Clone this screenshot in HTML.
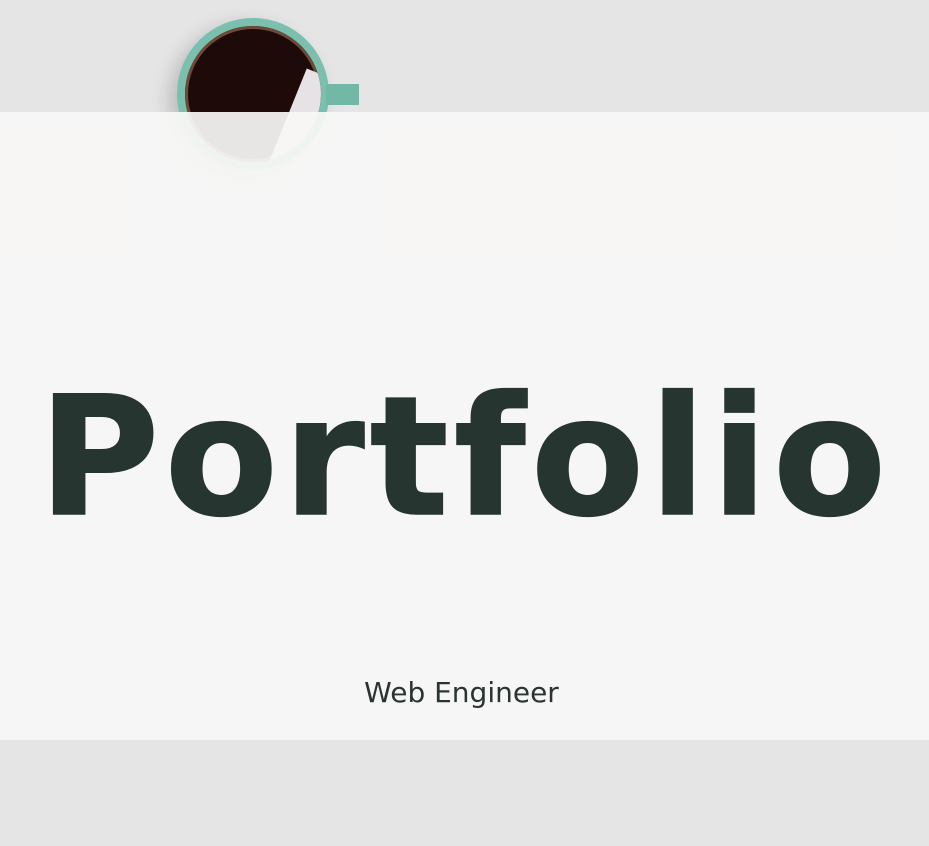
<!DOCTYPE html>
<html><head><style>
html,body{margin:0;padding:0;width:929px;height:846px;overflow:hidden;background:#e5e5e6;font-family:"DejaVu Sans","Liberation Sans",sans-serif}
.cup{position:absolute;left:177px;top:18px;width:152px;height:152px;border-radius:50%;background:#7bbfae;box-shadow:-8px 6px 18px rgba(0,0,0,.18)}
.in{position:absolute;left:8px;top:8px;width:136px;height:136px;border-radius:50%;background:#1e0a09;overflow:hidden;box-shadow:inset 0 0 0 3px #6d4a3a}
.in:after{content:"";position:absolute;left:96px;top:55px;width:90px;height:120px;background:#e6e2e5;transform:rotate(22deg)}
.handle{position:absolute;left:326px;top:84px;width:33px;height:21px;background:#73b7a6}
.band{position:absolute;left:0;top:112px;width:929px;height:628px;background:rgba(248,247,246,.93)}
h1{position:absolute;left:0;width:930px;top:357px;margin:0;text-align:center;font-size:165px;font-weight:bold;color:#26352f;line-height:200px;letter-spacing:5.2px;-webkit-text-stroke:1.5px #26352f}
p{position:absolute;left:0;width:923px;top:676px;margin:0;text-align:center;font-size:28px;color:#2b3530}
</style></head><body>
<div class="cup"><div class="in"></div></div>
<div class="handle"></div>
<div class="band"></div>
<h1>Portfolio</h1>
<p>Web Engineer</p>
</body></html>
